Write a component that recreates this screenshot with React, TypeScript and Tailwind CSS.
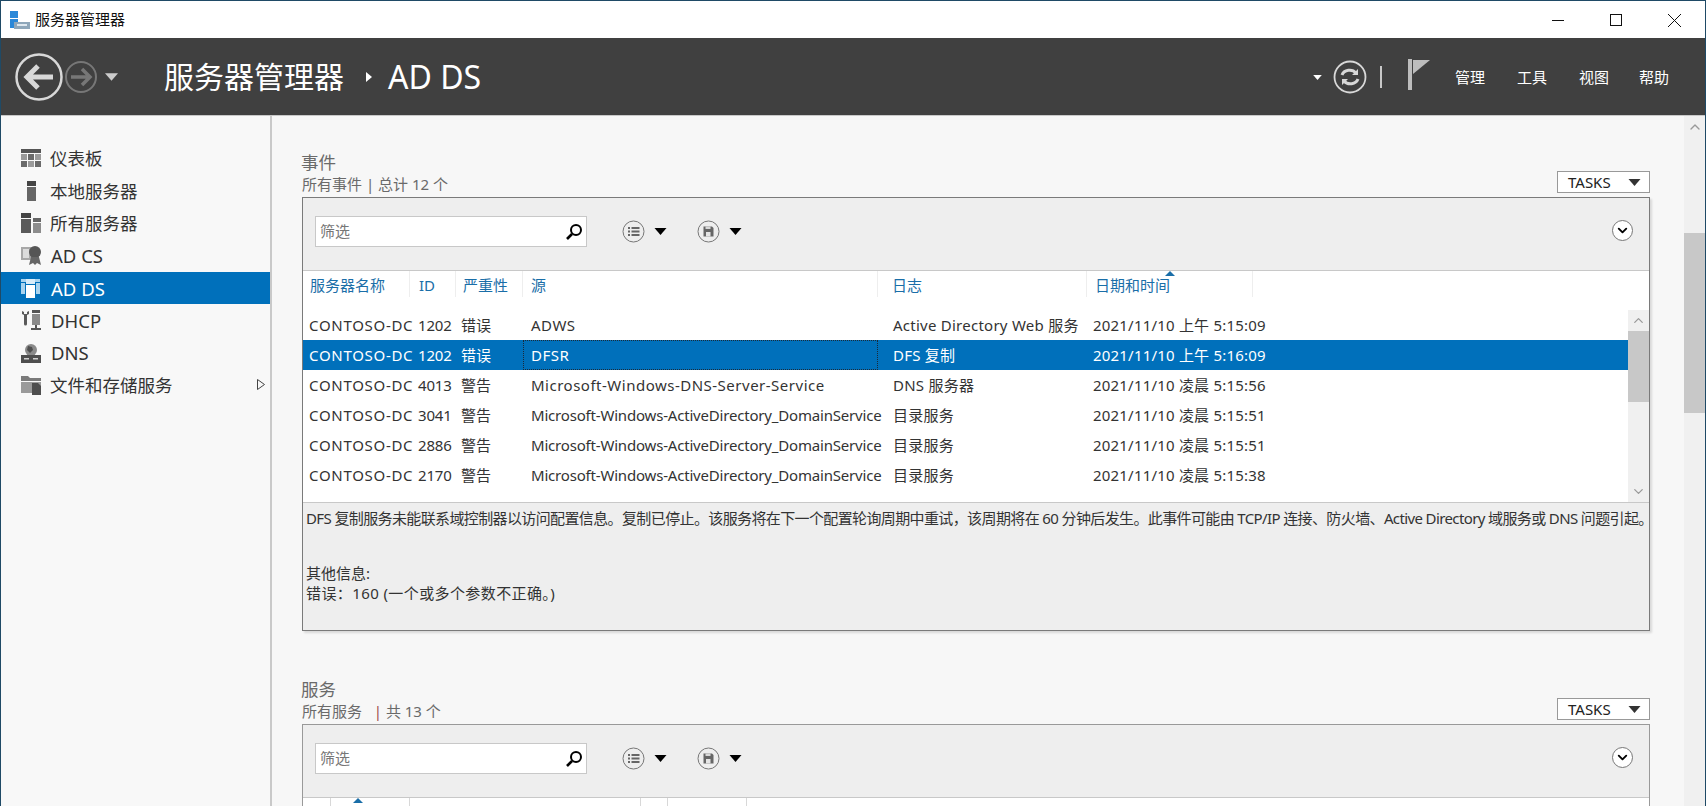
import { ChevronDown, ChevronUp } from "lucide-react";

const navItems = [
  { label: "仪表板", icon: "dashboard" },
  { label: "本地服务器", icon: "local" },
  { label: "所有服务器", icon: "all" },
  { label: "AD CS", icon: "adcs", latin: true },
  { label: "AD DS", icon: "adds", active: true, latin: true },
  { label: "DHCP", icon: "dhcp", latin: true },
  { label: "DNS", icon: "dns", latin: true },
  { label: "文件和存储服务", icon: "files", more: true },
];

const events = [
  ["CONTOSO-DC", "1202", "错误", "ADWS", "Active Directory Web 服务", "2021/11/10 上午 5:15:09"],
  ["CONTOSO-DC", "1202", "错误", "DFSR", "DFS 复制", "2021/11/10 上午 5:16:09"],
  ["CONTOSO-DC", "4013", "警告", "Microsoft-Windows-DNS-Server-Service", "DNS 服务器", "2021/11/10 凌晨 5:15:56"],
  ["CONTOSO-DC", "3041", "警告", "Microsoft-Windows-ActiveDirectory_DomainService", "目录服务", "2021/11/10 凌晨 5:15:51"],
  ["CONTOSO-DC", "2886", "警告", "Microsoft-Windows-ActiveDirectory_DomainService", "目录服务", "2021/11/10 凌晨 5:15:51"],
  ["CONTOSO-DC", "2170", "警告", "Microsoft-Windows-ActiveDirectory_DomainService", "目录服务", "2021/11/10 凌晨 5:15:38"],
];

const NavIcon = ({ name }: { name: string }) => {
  const c = "#6a6a6a";
  const l = "#9a9a9a";
  if (name === "dashboard")
    return (
      <svg width="20" height="20" viewBox="0 0 20 20">
        <rect x="0" y="1" width="20" height="4" fill="#555" />
        <rect x="0" y="6" width="6" height="6" fill={l} />
        <rect x="7" y="6" width="6" height="6" fill={c} />
        <rect x="14" y="6" width="6" height="6" fill={l} />
        <rect x="0" y="13" width="6" height="6" fill={c} />
        <rect x="7" y="13" width="6" height="6" fill={l} />
        <rect x="14" y="13" width="6" height="6" fill={c} />
      </svg>
    );
  if (name === "local")
    return (
      <svg width="20" height="20" viewBox="0 0 20 20">
        <rect x="6" y="0" width="9" height="5" fill="#444" />
        <rect x="6" y="6" width="9" height="14" fill="#666" />
      </svg>
    );
  if (name === "all")
    return (
      <svg width="20" height="20" viewBox="0 0 20 20">
        <rect x="0" y="0" width="10" height="5" fill="#444" />
        <rect x="0" y="6" width="10" height="14" fill="#5a5a5a" />
        <rect x="12" y="5" width="8" height="4" fill="#666" />
        <rect x="12" y="10" width="8" height="10" fill="#8c8c8c" />
      </svg>
    );
  if (name === "adcs")
    return (
      <svg width="20" height="20" viewBox="0 0 20 20">
        <rect x="0" y="2" width="11" height="13" fill="#a8a8a8" />
        <rect x="2" y="4" width="6" height="9" fill="#dcdcdc" />
        <circle cx="14" cy="7" r="6" fill="#555" />
        <path d="M10 12 L8 20 L12 18 L14 20 L16 18 L20 20 L18 12 Z" fill="#666" />
      </svg>
    );
  if (name === "adds")
    return (
      <svg width="20" height="20" viewBox="0 0 20 20">
        <rect x="0" y="1" width="19" height="3" fill="#a9d3ee" />
        <rect x="0" y="5" width="4" height="11" fill="#a9d3ee" />
        <rect x="15" y="5" width="4" height="11" fill="#a9d3ee" />
        <rect x="5" y="1" width="9" height="5" fill="#d9ecf8" />
        <rect x="5" y="7" width="9" height="13" fill="#fff" />
      </svg>
    );
  if (name === "dhcp")
    return (
      <svg width="20" height="20" viewBox="0 0 20 20">
        <path d="M1 1 V4 L3 5 V14 a1.5 1.5 0 0 0 3 0 V5 L8 4 V1 L6 2 V4 H3 V2 Z" fill="#5a5a5a" />
        <rect x="11" y="0" width="8" height="3" fill="#555" />
        <rect x="11" y="4" width="8" height="11" fill="#8a8a8a" />
        <rect x="14" y="15" width="2" height="3" fill="#555" />
        <rect x="10" y="18" width="10" height="2" fill="#555" />
      </svg>
    );
  if (name === "dns")
    return (
      <svg width="20" height="20" viewBox="0 0 20 20">
        <circle cx="10" cy="7" r="6" fill="#8a8a8a" />
        <path d="M7 3 L11 4 L12 7 L9 10 L6 7 Z" fill="#4e4e4e" />
        <rect x="0" y="12" width="20" height="8" fill="#4e4e4e" />
        <rect x="3" y="15" width="5" height="1.5" fill="#d0d0d0" />
        <rect x="12" y="15" width="5" height="1.5" fill="#d0d0d0" />
      </svg>
    );
  return (
    <svg width="20" height="20" viewBox="0 0 20 20">
      <path d="M0 1 H7 L9 3 H20 V6 H0 Z" fill="#7a7a7a" />
      <rect x="0" y="7" width="20" height="11" fill="#9a9a9a" />
      <path d="M11 8 H17 L20 11 V20 H11 Z" fill="#4e4e4e" />
    </svg>
  );
};

const Caret = ({ className }: { className: string }) => (
  <svg className={className} viewBox="0 0 12 7">
    <path d="M0 0 H12 L6 7 Z" fill="currentColor" />
  </svg>
);

const Toolbar = () => (
  <div className="h-[73px] shrink-0 bg-[#eeeeee] border-b border-[#c8c8c8] flex items-start pt-[18px] pl-[12px] pr-[16px]">
    <div className="w-[272px] h-[31px] bg-white border border-[#c8c8c8] flex items-center justify-between pl-[4px] pr-[3px]">
      <span className="text-[15px] text-[#777]">筛选</span>
      <svg width="18" height="18" viewBox="0 0 18 18" fill="none" stroke="#000" strokeWidth="2">
        <circle cx="11" cy="7" r="5" />
        <path d="M7 11 L2 16" strokeWidth="2.6" />
      </svg>
    </div>
    <svg className="ml-[35px] mt-[4px]" width="23" height="23" viewBox="0 0 23 23" fill="none">
      <circle cx="11.5" cy="11.5" r="10.5" stroke="#777" />
      <path d="M6 7 h2 v2 h-2z M6 10.5 h2 v2 h-2z M6 14 h2 v2 h-2z M9.5 7 h8 v2 h-8z M9.5 10.5 h8 v2 h-8z M9.5 14 h8 v2 h-8z" fill="#666" />
    </svg>
    <Caret className="ml-[9px] mt-[12px] w-[13px] h-[7px] text-black" />
    <svg className="ml-[30px] mt-[4px]" width="23" height="23" viewBox="0 0 23 23" fill="none">
      <circle cx="11.5" cy="11.5" r="10.5" stroke="#777" />
      <path d="M6.5 6.5 H15 L16.5 8 V16.5 H6.5 Z" fill="#666" />
      <rect x="8.5" y="6.5" width="5" height="2.5" fill="#d8d8d8" />
      <rect x="9" y="12" width="4.5" height="4.5" fill="#e4e4e4" />
    </svg>
    <Caret className="ml-[9px] mt-[12px] w-[13px] h-[7px] text-black" />
    <div className="ml-auto mt-[4px] w-[21px] h-[21px] rounded-full border border-[#777] bg-white flex items-center justify-center">
      <ChevronDown size={15} strokeWidth={3} className="text-black" />
    </div>
  </div>
);

const SectionHead = ({ title, sub, sep, count }: { title: string; sub: string; sep: string; count: string }) => (
  <div className="flex items-end justify-between h-[46px]">
    <div className="text-[#6a6a6a] mb-[2px]">
      <div className="text-[17.5px] leading-[24px] -ml-px">{title}</div>
      <div className="text-[15px] leading-[21px] whitespace-pre">
        {sub}
        <span className={sep}>|</span> {count}
      </div>
    </div>
    <div className="w-[93px] h-[22px] mb-[4px] border border-[#999] bg-white flex items-center justify-between pl-[10px] pr-[8px]">
      <span className="text-[15px] text-[#222]">TASKS</span>
      <Caret className="w-[13px] h-[7px] text-[#333]" />
    </div>
  </div>
);

const App = () => {
  return (
    <div className="w-[1706px] h-[806px] overflow-hidden flex flex-col border border-b-0 border-[#1f4a66] bg-white [font-family:'Noto_Sans','Noto_Sans_CJK_SC',sans-serif]">
      {/* Title bar */}
      <div className="h-[37px] shrink-0 flex items-center pl-[9px] bg-white">
        <svg width="20" height="20" viewBox="0 0 20 20">
          <rect x="0" y="1" width="8" height="7" fill="#2b88d8" />
          <rect x="0" y="9" width="8" height="9" fill="#2b88d8" />
          <rect x="4" y="12" width="16" height="7" fill="#8fa7ba" />
          <rect x="7" y="14" width="10" height="2" fill="#dfe8ef" />
        </svg>
        <span className="ml-[5px] text-[15px] text-[#111]">服务器管理器</span>
        <svg className="ml-auto mr-[23px]" width="130" height="14" viewBox="0 0 130 14" fill="none" stroke="#111" strokeWidth="1">
          <path d="M0 7.5 H12" />
          <rect x="58.5" y="1.5" width="11" height="11" />
          <path d="M116 1 L129 14 M129 1 L116 14" />
        </svg>
      </div>

      {/* Header */}
      <div className="h-[78px] shrink-0 bg-[#404040] border-b border-[#c8c8c8] flex items-center pt-[1px] text-white">
        <svg className="ml-[14px]" width="48" height="48" viewBox="0 0 48 48" fill="none" stroke="#d8d8d8">
          <circle cx="24" cy="24" r="22.5" strokeWidth="2.5" />
          <path d="M38 24 H12 M23 13 L12 24 L23 35" strokeWidth="5" />
        </svg>
        <svg className="ml-[2px]" width="32" height="32" viewBox="0 0 32 32" fill="none" stroke="#777">
          <circle cx="16" cy="16" r="15" strokeWidth="2" />
          <path d="M6 16 H24 M17 8 L25 16 L17 24" strokeWidth="3.5" />
        </svg>
        <Caret className="ml-[8px] w-[13px] h-[8px] text-[#ccc]" />
        <span className="ml-[46px] text-[30px] leading-none">服务器管理器</span>
        <svg className="ml-[22px]" width="6" height="10" viewBox="0 0 6 10">
          <path d="M0 0 L6 5 L0 10 Z" fill="#fff" />
        </svg>
        <span className="ml-[16px] text-[32px] leading-none">AD DS</span>
        <div className="ml-auto flex items-center">
          <Caret className="w-[9px] h-[5px] text-white" />
          <svg className="ml-[11px]" width="34" height="34" viewBox="0 0 34 34" fill="none" stroke="#d8d8d8">
            <circle cx="17" cy="17" r="15.5" strokeWidth="1.8" />
            <path d="M9 15 a8 7 0 0 1 14 -2 M25 19 a8 7 0 0 1 -14 2" strokeWidth="3" />
            <path d="M25 9 V15 H19 Z M9 25 V19 H15 Z" fill="#d8d8d8" stroke="none" />
          </svg>
          <div className="ml-[13px] w-[2px] h-[22px] bg-[#c8c8c8]" />
          <svg className="ml-[26px] -mt-[6px]" width="22" height="31" viewBox="0 0 22 31">
            <rect x="0" y="0" width="4" height="31" fill="#bdbdbd" />
            <path d="M5 1 H22 L5 15 Z" fill="#bdbdbd" />
          </svg>
          <div className="ml-[25px] mr-[36px] flex gap-[32px] text-[15px]">
            <span>管理</span>
            <span>工具</span>
            <span className="-mr-[2px]">视图</span>
            <span>帮助</span>
          </div>
        </div>
      </div>

      <div className="flex-1 min-h-0 flex">
        {/* Sidebar */}
        <div className="w-[271px] shrink-0 bg-[#f8f8f8] border-r-2 border-[#c9c9c9] pt-[26px] box-border">
          {navItems.map((n) => (
            <div
              key={n.label}
              className={
                n.active
                  ? "h-[32.4px] flex items-center pl-[20px] bg-[#0070bb] text-white"
                  : "h-[32.4px] flex items-center pl-[20px] text-[#333]"
              }
            >
              <NavIcon name={n.icon} />
              <span
                className={
                  n.latin
                    ? "ml-[10px] mt-[2px] text-[18.5px] leading-none"
                    : "ml-[9px] mt-[2px] text-[17.5px] leading-none"
                }
              >
                {n.label}
              </span>
              {n.more && (
                <svg className="ml-auto mr-[5px]" width="8" height="11" viewBox="0 0 8 11" fill="none" stroke="#444">
                  <path d="M0.5 0.5 L7.5 5.5 L0.5 10.5 Z" />
                </svg>
              )}
            </div>
          ))}
        </div>

        {/* Main */}
        <div className="flex-1 min-w-0 bg-[#f7f7f7] pt-[35px] pl-[30px] pr-[34px] overflow-hidden">
          <SectionHead title="事件" sub="所有事件 " sep="" count="总计 12 个" />
          <div className="h-[434px] flex flex-col border border-[#7a7a7a] shadow-[2px_2px_2px_rgba(0,0,0,0.12)]">
            <Toolbar />
            <div className="h-[39px] shrink-0 bg-white grid grid-cols-[107px_46px_67px_355px_209px_166px] text-[15px] text-[#1a6ea8] relative">
              <div className="pl-[7px] pt-[3px] border-r border-[#eeeeee] h-[26px]">服务器名称</div>
              <div className="pl-[9px] pt-[3px] border-r border-[#eeeeee] h-[26px]">ID</div>
              <div className="pl-[7px] pt-[3px] border-r border-[#eeeeee] h-[26px]">严重性</div>
              <div className="pl-[8px] pt-[3px] border-r border-[#eeeeee] h-[26px]">源</div>
              <div className="pl-[14px] pt-[3px] border-r border-[#eeeeee] h-[26px]">日志</div>
              <div className="pl-[8px] pt-[3px] border-r border-[#eeeeee] h-[26px]">日期和时间</div>
              <svg className="absolute left-[862px] top-0" width="10" height="5" viewBox="0 0 10 5">
                <path d="M0 5 L5 0 L10 5 Z" fill="#1a6ea8" />
              </svg>
            </div>
            <div className="h-[192px] shrink-0 bg-white flex">
              <div className="flex-1 min-w-0">
                {events.map((r, i) => {
                  const sel = i === 1;
                  const long = r[3].length > 40;
                  return (
                    <div
                      key={i}
                      className={
                        sel
                          ? "h-[30px] grid grid-cols-[107px_46px_67px_355px_209px_166px] items-center whitespace-nowrap text-[15px] bg-[#0070bb] text-white"
                          : "h-[30px] grid grid-cols-[107px_46px_67px_355px_209px_166px] items-center whitespace-nowrap text-[15px] text-[#333]"
                      }
                    >
                      <div className="pl-[6px] tracking-[0.7px]">{r[0]}</div>
                      <div className="pl-[8px] tracking-[-0.2px]">{r[1]}</div>
                      <div className="pl-[5px]">{r[2]}</div>
                      <div
                        className={
                          sel
                            ? "pl-[7px] h-[30px] leading-[28px] border border-dotted border-[#1b2a38] tracking-[0.5px]"
                            : long
                              ? "pl-[8px] tracking-[-0.19px]"
                              : "pl-[8px] tracking-[0.5px]"
                        }
                      >
                        {r[3]}
                      </div>
                      <div className="pl-[15px] tracking-[0.25px]">{r[4]}</div>
                      <div className="pl-[6px] tracking-[0.2px]">{r[5]}</div>
                    </div>
                  );
                })}
              </div>
              <div className="w-[21px] shrink-0 bg-[#f0f0f0] flex flex-col">
                <div className="h-[21px] flex items-center justify-center text-[#999]">
                  <ChevronUp size={15} strokeWidth={2} />
                </div>
                <div className="h-[71px] bg-[#c8c8c8]" />
                <div className="mt-auto h-[21px] flex items-center justify-center text-[#999]">
                  <ChevronDown size={15} strokeWidth={2} />
                </div>
              </div>
            </div>
            <div className="flex-1 bg-[#eeeeee] border-t border-[#c8c8c8] pl-[3px] pt-[5px] text-[15px] leading-[20px] text-[#333] whitespace-nowrap">
              <div className="tracking-[-0.62px]">DFS 复制服务未能联系域控制器以访问配置信息。复制已停止。该服务将在下一个配置轮询周期中重试，该周期将在 60 分钟后发生。此事件可能由 TCP/IP 连接、防火墙、Active Directory 域服务或 DNS 问题引起。</div>
              <div className="mt-[35px]">其他信息:</div>
              <div className="tracking-[0.4px]">错误：160 (一个或多个参数不正确。)</div>
            </div>
          </div>

          <div className="mt-[47px]">
            <SectionHead title="服务" sub="所有服务   " sep="text-[#a05050]" count="共 13 个" />
            <div className="h-[200px] border border-[#999]">
              <Toolbar />
              <div className="h-[20px] bg-white relative grid grid-cols-[28px_79px_231px_27px_79px] [&>div]:border-r [&>div]:border-[#d8d8d8] [&>div]:h-[10px]">
                <div />
                <div />
                <div />
                <div />
                <div />
                <svg className="absolute left-[50px] top-0" width="10" height="5" viewBox="0 0 10 5">
                  <path d="M0 5 L5 0 L10 5 Z" fill="#1a6ea8" />
                </svg>
              </div>
            </div>
          </div>
        </div>

        {/* Page scrollbar */}
        <div className="w-[21px] shrink-0 bg-[#f0f0f0] flex flex-col relative">
          <div className="h-[21px] flex items-center justify-center text-[#999]">
            <ChevronUp size={16} strokeWidth={2} />
          </div>
          <div className="mt-[96px] h-[180px] bg-[#c8c8c8]" />
        </div>
      </div>
    </div>
  );
};

export default App;
